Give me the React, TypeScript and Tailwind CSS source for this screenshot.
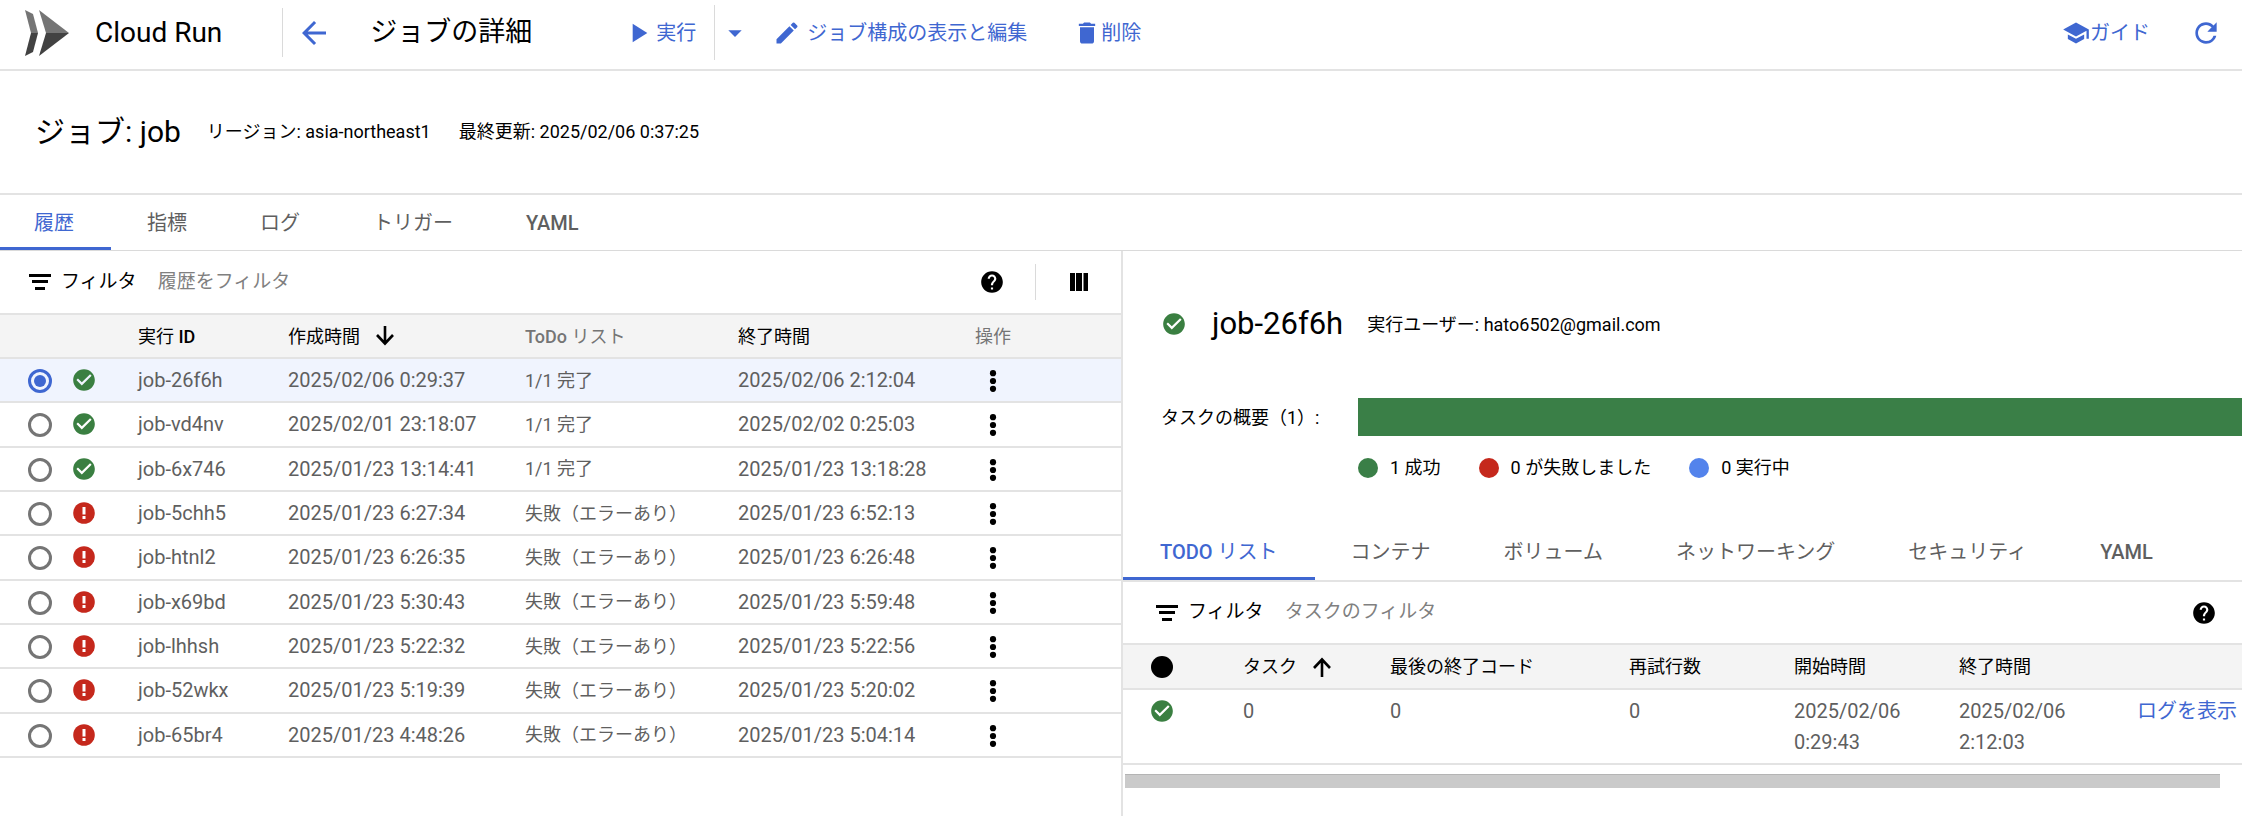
import { useState } from "react"
import {
  MdArrowBack,
  MdArrowDropDown,
  MdCheckCircle,
  MdDelete,
  MdEdit,
  MdHelp,
  MdPlayArrow,
  MdRefresh,
  MdSchool,
} from "react-icons/md"

interface Execution {
  id: string
  created: string
  finished: string
  ok: boolean
}

const executions: Execution[] = [
  { id: "job-26f6h", created: "2025/02/06 0:29:37", finished: "2025/02/06 2:12:04", ok: true },
  { id: "job-vd4nv", created: "2025/02/01 23:18:07", finished: "2025/02/02 0:25:03", ok: true },
  { id: "job-6x746", created: "2025/01/23 13:14:41", finished: "2025/01/23 13:18:28", ok: true },
  { id: "job-5chh5", created: "2025/01/23 6:27:34", finished: "2025/01/23 6:52:13", ok: false },
  { id: "job-htnl2", created: "2025/01/23 6:26:35", finished: "2025/01/23 6:26:48", ok: false },
  { id: "job-x69bd", created: "2025/01/23 5:30:43", finished: "2025/01/23 5:59:48", ok: false },
  { id: "job-lhhsh", created: "2025/01/23 5:22:32", finished: "2025/01/23 5:22:56", ok: false },
  { id: "job-52wkx", created: "2025/01/23 5:19:39", finished: "2025/01/23 5:20:02", ok: false },
  { id: "job-65br4", created: "2025/01/23 4:48:26", finished: "2025/01/23 5:04:14", ok: false },
]

const jobTabs = ["履歴", "指標", "ログ", "トリガー", "YAML"]
const detailTabs = ["TODO リスト", "コンテナ", "ボリューム", "ネットワーキング", "セキュリティ", "YAML"]

function CloudRunLogo() {
  return (
    <svg width="44" height="46" viewBox="0 0 44 46" aria-hidden="true">
      <path d="M0 0 L8 4 L13 23 H6 Z" fill="#757575" />
      <path d="M6 23 H13 L8 42 L0 46 Z" fill="#424242" />
      <path d="M14 0 L44 23 H21 Z" fill="#757575" />
      <path d="M21 23 H44 L14 46 Z" fill="#424242" />
    </svg>
  )
}

function FilterIcon() {
  return (
    <svg width="22" height="16" viewBox="0 0 22 16" aria-hidden="true">
      <path d="M0 0h22v3H0zM3 6h16v3H3zM6 13h10v3H6z" />
    </svg>
  )
}

function ColumnsIcon() {
  return (
    <svg width="18" height="18" viewBox="0 0 18 18" aria-hidden="true">
      <path d="M0 0h5v18H0zM6 0h6v18H6zM13.5 0H18v18h-4.5z" />
    </svg>
  )
}

function MoreIcon() {
  return (
    <svg width="8" height="22" viewBox="0 0 8 22" aria-hidden="true">
      <circle cx="4" cy="3.2" r="3.1" />
      <circle cx="4" cy="11" r="3.1" />
      <circle cx="4" cy="18.8" r="3.1" />
    </svg>
  )
}

function SortIcon({ up = false }: { up?: boolean }) {
  return (
    <svg
      width="18"
      height="20"
      viewBox="0 0 18 20"
      fill="none"
      stroke="currentColor"
      strokeWidth="2.6"
      aria-hidden="true"
    >
      <path d={up ? "M9 20V3M1 11l8-8.5 8 8.5" : "M9 0v17M1 9l8 8.5L17 9"} />
    </svg>
  )
}

function StatusIcon({ ok }: { ok: boolean }) {
  return ok ? (
    <MdCheckCircle className="size-[26px] text-[#3a7f41]" title="成功" />
  ) : (
    <svg width="26" height="26" viewBox="0 0 26 26" role="img" aria-label="失敗">
      <circle cx="13" cy="13" r="10.8" fill="#c5281c" />
      <path d="M11.5 7h3v7.5h-3zM11.5 16h3v3h-3z" fill="#fff" />
    </svg>
  )
}

function Tabs({ items, first }: { items: string[]; first: string }) {
  const [active, setActive] = useState(items[0])

  return (
    <div role="tablist" className="flex h-full">
      {items.map((item, i) => (
        <button
          key={item}
          role="tab"
          aria-selected={item === active}
          onClick={() => setActive(item)}
          className={`border-b-3 pt-[3px] pr-[37px] text-[20px] whitespace-nowrap ${i === 0 ? first : "pl-9"} ${
            /[A-Z]/.test(item) ? "font-medium" : ""
          } ${item === active ? "border-[#3f67d1] text-[#3f67d1]" : "border-transparent text-[#5f5f5f]"}`}
        >
          {item.startsWith("TODO") ? (
            <>
              TODO <span className="font-normal">リスト</span>
            </>
          ) : (
            item
          )}
        </button>
      ))}
    </div>
  )
}

function FilterBox({ id, placeholder }: { id: string; placeholder: string }) {
  return (
    <>
      <label htmlFor={id} className="flex items-center gap-[10px] text-[19px]">
        <FilterIcon />
        フィルタ
      </label>
      <input
        id={id}
        type="text"
        placeholder={placeholder}
        className="ml-[21px] min-w-0 flex-1 text-[19px] outline-none placeholder:text-[#808080]"
      />
    </>
  )
}

function Header() {
  return (
    <header className="flex h-[71px] items-center border-b-2 border-[#e3e3e3] pb-1 pl-[25px] whitespace-nowrap">
      <CloudRunLogo />
      <span className="ml-[26px] text-[28px]">Cloud Run</span>
      <div className="ml-[60px] h-[49px] w-px bg-[#dadada]" />
      <button aria-label="戻る" className="ml-[13px] text-[#3f67d1]">
        <MdArrowBack className="size-9" />
      </button>
      <h1 className="ml-[38px] text-[27px]">ジョブの詳細</h1>
      <div className="ml-[90px] flex items-center text-[20px] text-[#3f67d1]">
        <button className="flex items-center gap-[2px]">
          <MdPlayArrow className="size-8" />
          実行
        </button>
        <div className="ml-[18px] h-[55px] w-px bg-[#dadada]" />
        <button aria-label="その他の実行オプション" className="ml-1">
          <MdArrowDropDown className="size-8" />
        </button>
        <button className="ml-[22px] flex items-center gap-[6px]">
          <MdEdit className="size-7" />
          ジョブ構成の表示と編集
        </button>
        <button className="ml-[46px] flex items-center">
          <MdDelete className="size-7" />
          削除
        </button>
      </div>
      <div className="mr-5 ml-auto flex items-center text-[20px] text-[#3f67d1]">
        <button className="flex items-center">
          <MdSchool className="size-7" />
          ガイド
        </button>
        <button aria-label="更新" className="ml-10">
          <MdRefresh className="size-8" />
        </button>
      </div>
    </header>
  )
}

function History() {
  const [selected, setSelected] = useState("job-26f6h")

  return (
    <section className="w-1/2">
      <div className="flex h-[62px] items-center pl-[29px]">
        <FilterBox id="history-filter" placeholder="履歴をフィルタ" />
        <button aria-label="ヘルプ">
          <MdHelp className="size-[26px]" />
        </button>
        <div className="ml-[30px] h-9 w-px bg-[#dadada]" />
        <button aria-label="列の表示" className="mr-[33px] ml-[34px]">
          <ColumnsIcon />
        </button>
      </div>
      <table className="h-[445px] w-full table-fixed border-collapse text-left whitespace-nowrap">
        <colgroup>
          <col className="w-[71px]" />
          <col className="w-[67px]" />
          <col className="w-[150px]" />
          <col className="w-[237px]" />
          <col className="w-[213px]" />
          <col className="w-[237px]" />
          <col />
        </colgroup>
        <thead>
          <tr className="h-11 border-y-2 border-[#e3e3e3] bg-[#f4f4f4] text-[18px]">
            <th />
            <th />
            <th className="font-normal">
              実行 <span className="font-medium">ID</span>
            </th>
            <th className="font-normal" aria-sort="descending">
              <button className="flex items-center gap-4">
                作成時間
                <SortIcon />
              </button>
            </th>
            <th className="font-normal text-[#757575]">
              <span className="font-medium">ToDo</span> リスト
            </th>
            <th className="font-normal">終了時間</th>
            <th className="font-normal text-[#757575]">操作</th>
          </tr>
        </thead>
        <tbody>
          {executions.map((e) => (
            <tr
              key={e.id}
              className={`h-11 border-b-2 border-[#e3e3e3] text-[20px] text-[#5f5f5f] ${e.id === selected ? "bg-[#f0f4fe]" : ""}`}
            >
              <td className="pt-[2px] pl-7">
                <input
                  type="radio"
                  name="execution"
                  aria-label={e.id}
                  checked={e.id === selected}
                  onChange={() => setSelected(e.id)}
                  className="block size-6 appearance-none rounded-full border-3 border-[#757575] bg-clip-content p-[3px] checked:border-[#3f67d1] checked:bg-[#3f67d1]"
                />
              </td>
              <td>
                <StatusIcon ok={e.ok} />
              </td>
              <td>{e.id}</td>
              <td>{e.created}</td>
              <td className="text-[18px]">{e.ok ? "1/1 完了" : "失敗（エラーあり）"}</td>
              <td>{e.finished}</td>
              <td className="pt-[2px] pl-[14px]">
                <button aria-label={`${e.id} の操作`} className="block text-black">
                  <MoreIcon />
                </button>
              </td>
            </tr>
          ))}
        </tbody>
      </table>
    </section>
  )
}

function Details() {
  return (
    <section className="w-1/2 border-l-2 border-[#e3e3e3]">
      <div className="mt-[51px] flex h-11 items-center pl-[38px] whitespace-nowrap">
        <StatusIcon ok />
        <h2 className="ml-[25px] text-[31px]">job-26f6h</h2>
        <span className="ml-6 text-[18px]">実行ユーザー: hato6502@gmail.com</span>
      </div>
      <div className="mt-[52px] flex h-[38px] items-center pl-[38px]">
        <span className="w-[197px] text-[18px]">タスクの概要（1）:</span>
        <div className="h-full flex-1 bg-[#3a7f47]" />
      </div>
      <ul className="mt-[18px] ml-[235px] flex gap-[38px] text-[18px]">
        <li className="flex items-center gap-3">
          <span className="size-5 rounded-full bg-[#3a7f47]" />1 成功
        </li>
        <li className="flex items-center gap-3">
          <span className="size-5 rounded-full bg-[#c5281c]" />0 が失敗しました
        </li>
        <li className="flex items-center gap-3">
          <span className="size-5 rounded-full bg-[#5383ec]" />0 実行中
        </li>
      </ul>
      <div className="mt-[43px] h-[58px] border-b-2 border-[#e3e3e3]">
        <Tabs items={detailTabs} first="pl-[37px]" />
      </div>
      <div className="flex h-[61px] items-center pr-[25px] pl-[33px]">
        <FilterBox id="task-filter" placeholder="タスクのフィルタ" />
        <button aria-label="ヘルプ">
          <MdHelp className="size-[26px]" />
        </button>
      </div>
      <table className="w-full table-fixed border-collapse text-left whitespace-nowrap">
        <colgroup>
          <col className="w-[120px]" />
          <col className="w-[147px]" />
          <col className="w-[239px]" />
          <col className="w-[165px]" />
          <col className="w-[165px]" />
          <col className="w-[178px]" />
          <col />
        </colgroup>
        <thead>
          <tr className="h-[45px] border-y-2 border-[#e3e3e3] bg-[#f4f4f4] text-[18px]">
            <th className="pl-7">
              <span className="block size-[22px] rounded-full bg-black" />
            </th>
            <th className="font-normal" aria-sort="ascending">
              <button className="flex items-center gap-4">
                タスク
                <SortIcon up />
              </button>
            </th>
            <th className="font-normal">最後の終了コード</th>
            <th className="font-normal">再試行数</th>
            <th className="font-normal">開始時間</th>
            <th className="font-normal">終了時間</th>
            <th />
          </tr>
        </thead>
        <tbody>
          <tr className="h-[75px] border-b-2 border-[#e3e3e3] align-top text-[20px] leading-[31px] text-[#5f5f5f]">
            <td className="pt-2 pl-[26px]">
              <StatusIcon ok />
            </td>
            <td className="pt-[6px]">0</td>
            <td className="pt-[6px]">0</td>
            <td className="pt-[6px]">0</td>
            <td className="pt-[6px]">
              2025/02/06
              <br />
              0:29:43
            </td>
            <td className="pt-[6px]">
              2025/02/06
              <br />
              2:12:03
            </td>
            <td className="pt-[6px]">
              <a href="#logs" className="text-[#3f67d1]">
                ログを表示
              </a>
            </td>
          </tr>
        </tbody>
      </table>
      <div className="mt-[9px] mr-[22px] ml-[2px] h-[14px] border-t border-[#b4b4b4] bg-[#cacaca]" />
    </section>
  )
}

export default function App() {
  return (
    <div className="flex min-h-screen flex-col overflow-x-hidden bg-white font-[Roboto,'Noto_Sans_CJK_JP',sans-serif] text-black">
      <Header />
      <div className="flex h-[124px] items-center border-b-2 border-[#e3e3e3] pb-[2px] pl-[35px]">
        <h2 className="text-[30px]">ジョブ: job</h2>
        <span className="ml-[26px] text-[18px]">リージョン: asia-northeast1</span>
        <span className="ml-7 text-[18px]">最終更新: 2025/02/06 0:37:25</span>
      </div>
      <div className="h-14 border-b border-[#dadada]">
        <Tabs items={jobTabs} first="pl-[34px]" />
      </div>
      <main className="flex flex-1">
        <History />
        <Details />
      </main>
    </div>
  )
}
